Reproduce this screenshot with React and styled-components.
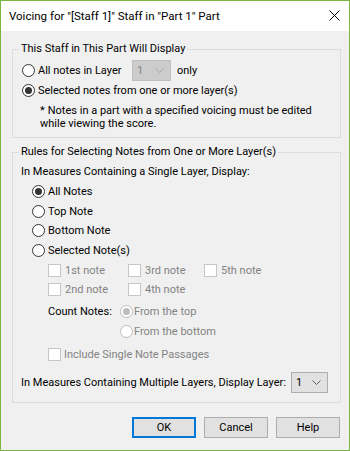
import React from "react";
import styled, { createGlobalStyle } from "styled-components";

const Global = createGlobalStyle`
  html, body { margin: 0; padding: 0; background: #f0f0f0; }
  body { font-family: Roboto, "Liberation Sans", sans-serif; font-size: 11px; color: #000; }
  * { box-sizing: border-box; }
`;

const Window = styled.div`
  width: 350px;
  height: 451px;
  border: 1px solid #7db544;
  display: flex;
  flex-direction: column;
  background: #f0f0f0;
`;

const TitleBar = styled.div`
  height: 30px;
  background: #fff;
  display: flex;
  align-items: center;
  justify-content: space-between;
  padding: 0 9px 1px 8px;
  flex-shrink: 0;
`;

const TitleText = styled.div`
  font-size: 11.5px;
  line-height: 14px;
  white-space: nowrap;
`;

const CloseIcon = styled.svg`
  width: 11px;
  height: 11px;
  display: block;
`;

const Body = styled.div`
  flex: 1;
  display: flex;
  flex-direction: column;
  padding: 18px 8px 0 11px;
`;

const GroupBox = styled.div`
  position: relative;
  border: 1px solid #dcdcdc;
  height: ${(p) => p.$h}px;
  margin-top: ${(p) => p.$mt || 0}px;
  padding: ${(p) => p.$pad};
  display: flex;
  flex-direction: column;
`;

const Legend = styled.div`
  position: absolute;
  top: -8px;
  left: 6px;
  padding: 0 2px;
  line-height: 13px;
  background: #f0f0f0;
  white-space: nowrap;
`;

const Row = styled.div`
  display: flex;
  align-items: center;
  height: ${(p) => p.$h || 20}px;
  margin-top: ${(p) => p.$mt || 0}px;
  padding-left: ${(p) => p.$indent || 0}px;
  white-space: nowrap;
  color: ${(p) => (p.$disabled ? "#838383" : "#000")};
`;

const RadioCircle = styled.span`
  width: 13px;
  height: 13px;
  border-radius: 50%;
  border: 1px solid ${(p) => (p.$disabled ? "#bcbcbc" : "#333")};
  background: #fff;
  display: inline-flex;
  align-items: center;
  justify-content: center;
  flex-shrink: 0;
  &::after {
    content: "";
    width: 7px;
    height: 7px;
    border-radius: 50%;
    background: ${(p) => (p.$disabled ? "#bcbcbc" : "#333")};
    display: ${(p) => (p.$checked ? "block" : "none")};
  }
`;

const Box = styled.span`
  width: 13px;
  height: 13px;
  border: 1px solid ${(p) => (p.$disabled ? "#c6c6c6" : "#333")};
  background: #fff;
  flex-shrink: 0;
`;

const Label = styled.span`
  margin-left: ${(p) => p.$gap || 3}px;
  line-height: 13px;
`;

const Choice = styled.div`
  display: flex;
  align-items: center;
  width: ${(p) => (p.$w ? `${p.$w}px` : "auto")};
  flex-shrink: 0;
  color: ${(p) => (p.$disabled ? "#838383" : "#000")};
`;

const Radio = ({ checked, disabled, children, width, gap }) => (
  <Choice $w={width} $disabled={disabled}>
    <RadioCircle $checked={checked} $disabled={disabled} />
    <Label $gap={gap}>{children}</Label>
  </Choice>
);

const Check = ({ disabled, children, width, gap }) => (
  <Choice $w={width} $disabled={disabled}>
    <Box $disabled={disabled} />
    <Label $gap={gap || 4}>{children}</Label>
  </Choice>
);

const Select = styled.div`
  width: ${(p) => p.$w}px;
  height: 21px;
  border: 1px solid ${(p) => (p.$disabled ? "#bfbfbf" : "#adadad")};
  background: ${(p) => (p.$disabled ? "#cccccc" : "#e1e1e1")};
  color: ${(p) => (p.$disabled ? "#838383" : "#000")};
  display: flex;
  align-items: center;
  justify-content: space-between;
  padding: 0 6px 0 4px;
  margin-left: ${(p) => p.$ml || 0}px;
  flex-shrink: 0;
`;

const Chevron = ({ color }) => (
  <svg width="9" height="5" viewBox="0 0 9 5" style={{ display: "block" }}>
    <polyline points="0.5,0.5 4.5,4.5 8.5,0.5" fill="none" stroke={color} strokeWidth="1" />
  </svg>
);

const Note = styled.div`
  margin-top: ${(p) => p.$mt || 0}px;
  padding-left: ${(p) => p.$indent}px;
  line-height: 13px;
  white-space: nowrap;
`;

const Star = styled.span`
  margin-right: 3px;
`;

const RadioStack = styled.div`
  display: flex;
  flex-direction: column;
  padding-left: 19px;
  margin-top: 1px;
  & > div {
    height: 19.5px;
  }
`;

const CheckGrid = styled.div`
  display: grid;
  grid-template-columns: 80px 76px auto;
  grid-auto-rows: 19px;
  align-items: center;
  margin-top: 1px;
  padding-left: 35px;
`;

const CountBlock = styled.div`
  display: grid;
  grid-template-columns: 72px auto;
  grid-auto-rows: 20px;
  align-items: center;
  margin-top: 2px;
  padding-left: 35px;
`;

const Spacer = styled.div``;

const ButtonRow = styled.div`
  display: flex;
  justify-content: flex-end;
  gap: 8px;
  margin-top: 14px;
  margin-right: 1px;
`;

const Button = styled.button`
  width: 64px;
  height: 21px;
  font-family: inherit;
  font-size: 11px;
  color: #000;
  background: #e1e1e1;
  border: ${(p) => (p.$default ? "2px solid #0078d7" : "1px solid #adadad")};
  padding: 0;
  margin: 0;
  border-radius: 0;
  display: flex;
  align-items: center;
  justify-content: center;
`;

export default function App() {
  return (
    <>
      <Global />
      <Window>
        <TitleBar>
          <TitleText>Voicing for "[Staff 1]" Staff in "Part 1" Part</TitleText>
          <CloseIcon viewBox="0 0 11 11">
            <line x1="0.5" y1="0.5" x2="10.5" y2="10.5" stroke="#000" strokeWidth="1" />
            <line x1="10.5" y1="0.5" x2="0.5" y2="10.5" stroke="#000" strokeWidth="1" />
          </CloseIcon>
        </TitleBar>
        <Body>
          <GroupBox $h={89} $pad="10px 0 0 9px">
            <Legend>This Staff in This Part Will Display</Legend>
            <Row $h={21}>
              <Radio width={110}>All notes in Layer</Radio>
              <Select $w={39} $disabled>
                <span>1</span>
                <Chevron color="#a6a6a6" />
              </Select>
              <Label $gap={6}>only</Label>
            </Row>
            <Row $h={18}>
              <Radio checked>Selected notes from one or more layer(s)</Radio>
            </Row>
            <Note $mt={5} $indent={18}>
              <Star>*</Star>Notes in a part with a specified voicing must be edited
              <br />
              while viewing the score.
            </Note>
          </GroupBox>

          <GroupBox $h={251} $mt={14} $pad="8px 0 0 0">
            <Legend>Rules for Selecting Notes from One or More Layer(s)</Legend>
            <Row $h={20} $indent={8}>
              In Measures Containing a Single Layer, Display:
            </Row>
            <RadioStack>
              <Row>
                <Radio checked>All Notes</Radio>
              </Row>
              <Row>
                <Radio>Top Note</Radio>
              </Row>
              <Row>
                <Radio>Bottom Note</Radio>
              </Row>
              <Row>
                <Radio>Selected Note(s)</Radio>
              </Row>
            </RadioStack>
            <CheckGrid>
              <Check disabled>1st note</Check>
              <Check disabled>3rd note</Check>
              <Check disabled>5th note</Check>
              <Check disabled>2nd note</Check>
              <Check disabled>4th note</Check>
            </CheckGrid>
            <CountBlock>
              <span>Count Notes:</span>
              <Radio checked disabled gap={1}>From the top</Radio>
              <Spacer />
              <Radio disabled gap={1}>From the bottom</Radio>
            </CountBlock>
            <Row $h={20} $mt={3} $indent={35}>
              <Check disabled gap={3}>Include Single Note Passages</Check>
            </Row>
            <Row $h={21} $mt={8} $indent={8}>
              <Choice $w={270}>In Measures Containing Multiple Layers, Display Layer:</Choice>
              <Select $w={37}>
                <span>1</span>
                <Chevron color="#606060" />
              </Select>
            </Row>
          </GroupBox>

          <ButtonRow>
            <Button $default>OK</Button>
            <Button>Cancel</Button>
            <Button>Help</Button>
          </ButtonRow>
        </Body>
      </Window>
    </>
  );
}
